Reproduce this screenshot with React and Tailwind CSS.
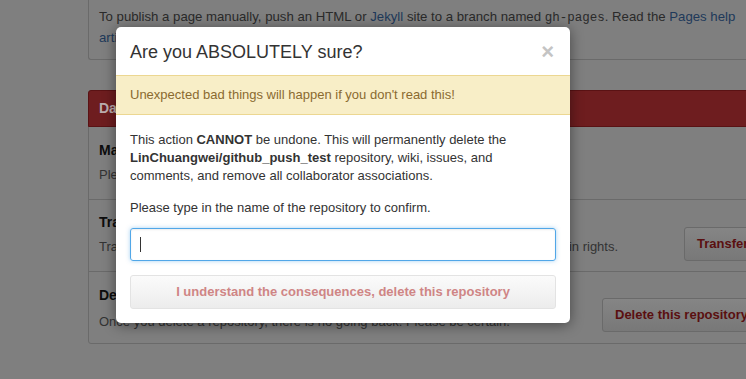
import React from "react";

export default function App() {
  const font = { fontFamily: '"Liberation Sans", Arial, Helvetica, sans-serif' };
  return (
    <div className="relative w-[746px] h-[379px] overflow-hidden bg-[#7f7f7f]" style={font}>
      {/* Background page (dimmed) */}
      <div className="pl-[88px]">
        <div className="border-l border-b border-[#6a6a6a] rounded-bl-[3px] pl-[10px] pt-[7px] pb-[10px] h-[60px] text-[13.2px] leading-[20px] text-[#2a2a2a] whitespace-nowrap">
          <div>
            To publish a page manually, push an HTML or <span className="text-[#20395a]">Jekyll</span> site to a branch named{" "}
            <span className="font-['Liberation_Mono',monospace] text-[12.5px]">gh-pages</span>. Read the{" "}
            <span className="text-[#20395a]">Pages help</span>
          </div>
          <div className="text-[#20395a]">articles</div>
        </div>
        <div className="mt-[30px] h-[254px] border border-[#6a6a6a] rounded-[3px] w-[700px]">
          <div className="h-[37px] -mt-px -ml-px bg-[#6e1d1f] border border-[#5a1214] rounded-t-[3px] pl-[10px] flex items-center text-[14px] font-bold text-[#bcaeae]">
            Danger Zone
          </div>
          <div className="h-[73px] border-b border-[#6a6a6a] pl-[10px] pt-[13px] text-[14px] leading-[20px]">
            <div className="font-bold text-[#0d0d0d]">Make this repository private</div>
            <div className="mt-[5px] text-[13px] text-[#333]">Please upgrade your plan to make this repository private.</div>
          </div>
          <div className="h-[72px] border-b border-[#6a6a6a] pl-[10px] pt-[12px] text-[14px] leading-[20px]">
            <div className="font-bold text-[#0d0d0d]">Transfer ownership</div>
            <div className="mt-[5px] text-[13px] text-[#333] whitespace-nowrap">Transfer this repository to another user or to an organization where you have admin rights.</div>
          </div>
          <div className="pl-[10px] pt-[13px] text-[14px] leading-[20px]">
            <div className="font-bold text-[#0d0d0d]">Delete this repository</div>
            <div className="mt-[7px] text-[13px] text-[#333] whitespace-nowrap">Once you delete a repository, there is no going back. Please be certain.</div>
          </div>
        </div>
      </div>
      {/* background buttons */}
      <div className="absolute left-[684px] top-[227px] h-[34px] w-[120px] rounded-[3px] border border-[#6a6a6a] bg-gradient-to-b from-[#858585] to-[#787878] pl-[12px] flex items-center text-[13px] font-bold text-[#5a0f10]">
        Transfer
      </div>
      <div className="absolute left-[602px] top-[298px] h-[34px] w-[180px] rounded-[3px] border border-[#6a6a6a] bg-gradient-to-b from-[#858585] to-[#787878] pl-[12px] flex items-center text-[13px] font-bold text-[#5a0f10]">
        Delete this repository
      </div>

      {/* Modal */}
      <div className="absolute left-[116px] top-[27px] w-[454px] h-[296px] bg-white rounded-[5px] shadow-[0_2px_14px_rgba(0,0,0,0.45)] overflow-hidden">
        <div className="h-[48px] flex items-center justify-between pl-[14px] pr-[16px]">
          <div className="text-[18px] text-[#333] pt-[2px]">Are you ABSOLUTELY sure?</div>
          <div className="text-[#c4c4c4] text-[22px] leading-none font-bold pt-[2px]">×</div>
        </div>
        <div className="h-[40px] bg-[#f8eec7] border-t border-b border-[#ecd791] pl-[14px] flex items-center text-[13px] text-[#8a6a30]">
          Unexpected bad things will happen if you don't read this!
        </div>
        <div className="px-[14px] pt-[16px] text-[13px] leading-[18px] text-[#333]">
          <p>
            This action <b>CANNOT</b> be undone. This will permanently delete the{" "}
            <b>LinChuangwei/github_push_test</b> repository, wiki, issues, and comments, and remove all collaborator associations.
          </p>
          <p className="mt-[14px]">Please type in the name of the repository to confirm.</p>
          <div className="mt-[11px] h-[33px] rounded-[3px] border border-[#51a7e8] shadow-[0_0_4px_rgba(81,167,232,0.5),inset_0_1px_2px_rgba(0,0,0,0.075)] flex items-center pl-[9px]">
            <div className="w-px h-[15px] bg-[#333]"></div>
          </div>
          <div className="mt-[14px] h-[34px] rounded-[3px] border border-[#e3e3e3] bg-gradient-to-b from-[#fbfbfb] to-[#ececec] flex items-center justify-center text-[13px] font-bold text-[#cf8585]">
            I understand the consequences, delete this repository
          </div>
        </div>
      </div>
    </div>
  );
}
